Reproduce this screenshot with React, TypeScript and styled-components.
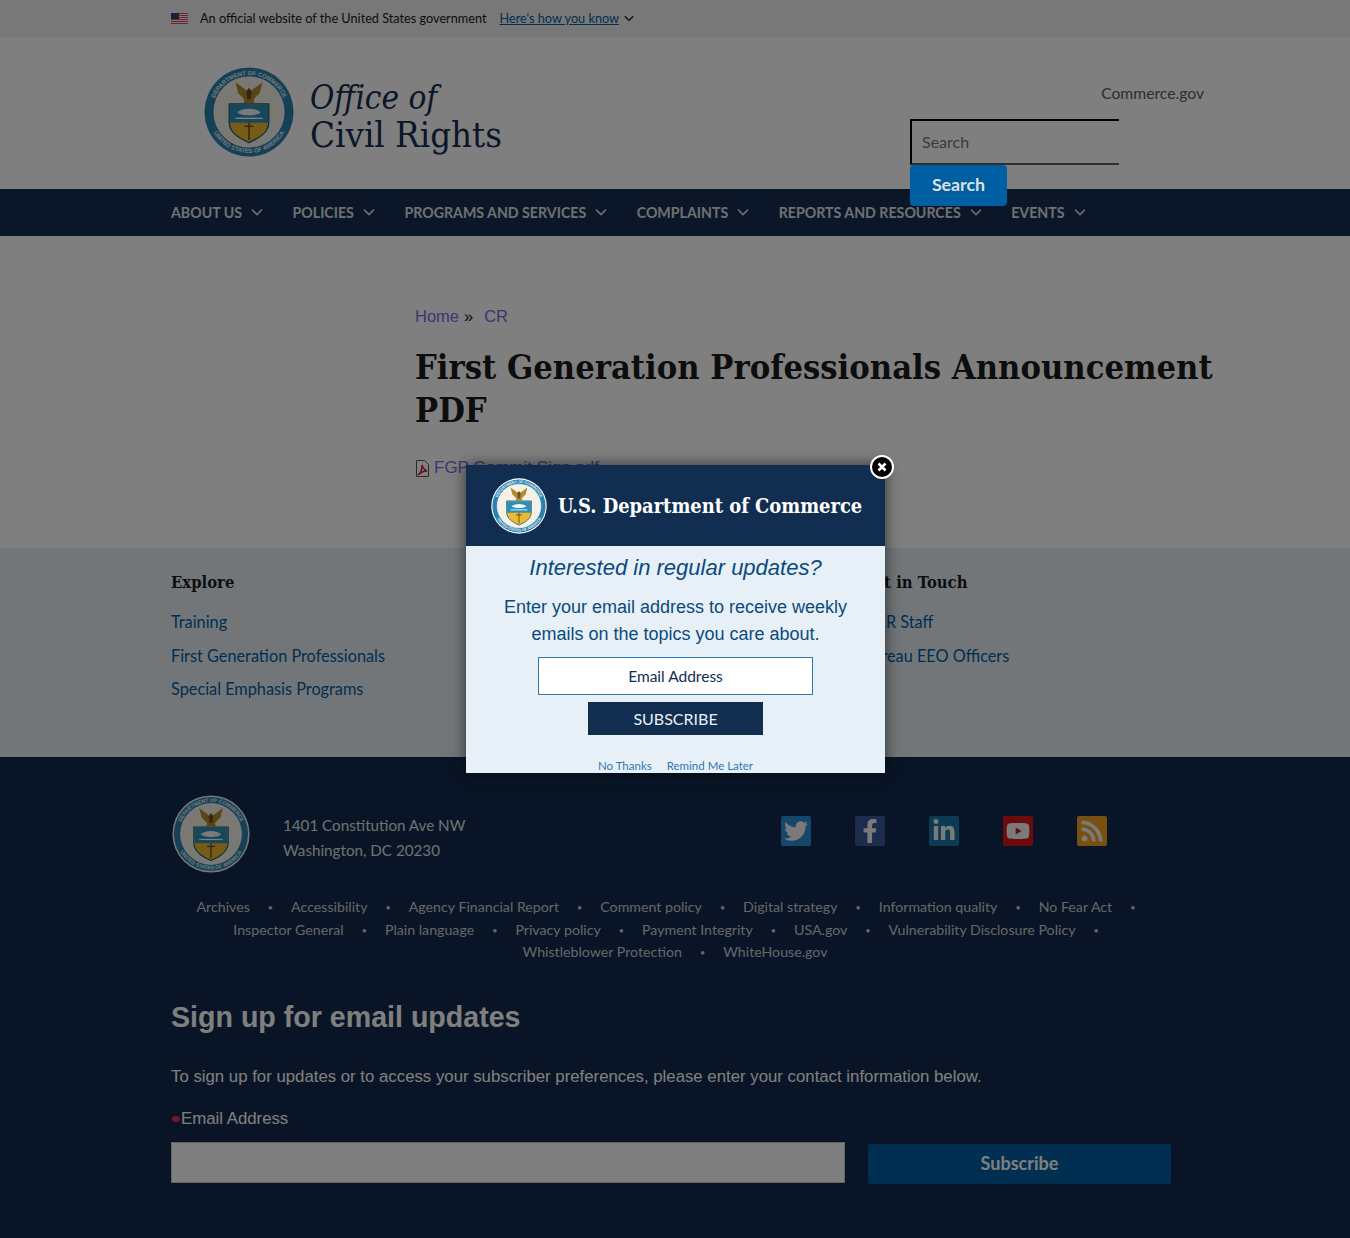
import styled, { createGlobalStyle } from 'styled-components';
import { FaFacebookF, FaLinkedinIn, FaRss, FaTwitter, FaYoutube } from 'react-icons/fa';

const sans = `Lato, 'Noto Sans', sans-serif`;
const serif = `'DejaVu Serif Condensed', 'DejaVu Serif', serif`;
const arial = `'Liberation Sans', Arial, sans-serif`;

const GlobalStyle = createGlobalStyle`
	* {
		box-sizing: border-box;
	}
	html, body {
		margin: 0;
		padding: 0;
		background: #fff;
	}
`;

const Page = styled.div`
	position: relative;
	width: 1350px;
	height: 1238px;
	overflow: hidden;
	font-family: ${sans};
`;

const Banner = styled.div`
	display: flex;
	align-items: center;
	height: 38px;
	padding: 0 0 2px 171px;
	background: #f0f0f0;
	font-size: 12.7px;
	color: #1b1b1b;
`;

const BannerText = styled.span`
	margin-left: 12px;
`;

const BannerLink = styled.a`
	margin: 0 5px 0 13px;
	color: #005ea2;
	text-decoration: underline;
`;

const Masthead = styled.header`
	display: flex;
	justify-content: space-between;
	height: 151px;
	padding: 29px 146px 0 204px;
`;

const Brand = styled.div`
	display: flex;
	align-items: center;
	gap: 16px;
	height: 90px;
`;

const BrandTitle = styled.div`
	padding-top: 8px;
	font-family: ${serif};
	font-size: 36.3px;
	line-height: 37px;
	color: #162e51;
`;

const BrandItalic = styled.em`
	display: block;
	font-size: 33px;
	font-style: italic;
`;

const Tools = styled.div`
	display: flex;
	flex-direction: column;
	width: 294px;
	padding-top: 16px;
`;

const ToolLink = styled.a`
	align-self: flex-end;
	font-size: 15.7px;
	line-height: 20px;
	color: #565c65;
`;

const SearchInput = styled.div`
	display: flex;
	flex: none;
	align-items: center;
	width: 209px;
	height: 46px;
	margin-top: 16px;
	padding: 0 0 2px 10px;
	border-top: 2px solid #000;
	border-left: 2px solid #000;
	border-bottom: 2px solid #565c65;
	font-size: 16px;
	color: #757575;
`;

const SearchButton = styled.button`
	position: relative;
	z-index: 1;
	flex: none;
	width: 97px;
	height: 41px;
	padding: 0 0 3px;
	border: 0;
	border-radius: 4px;
	background: #005ea2;
	font-family: ${sans};
	font-size: 17.8px;
	font-weight: 700;
	color: #dfe1e2;
`;

const NavBar = styled.nav`
	display: flex;
	align-items: center;
	gap: 29.5px;
	height: 47px;
	padding: 0 0 1px 171px;
	background: #162e51;
`;

const NavItem = styled.a`
	display: flex;
	align-items: center;
	gap: 9px;
	font-size: 14.2px;
	font-weight: 700;
	color: #dfe1e2;
`;

const Content = styled.main`
	height: 312px;
	padding: 68px 120px 0 415px;
`;

const Crumbs = styled.div`
	display: flex;
	align-items: center;
	height: 24px;
	font-family: ${arial};
	font-size: 16.5px;
	color: #1b1b1b;
`;

const CrumbLink = styled.a`
	color: #7070e0;
`;

const CrumbSep = styled.span`
	margin: 0 11px 0 5px;
`;

const PageTitle = styled.h1`
	margin: 18px 0 0;
	font-family: ${serif};
	font-size: 34.2px;
	font-weight: 700;
	line-height: 43px;
	color: #1b1b1b;
`;

const FileRow = styled.div`
	display: flex;
	align-items: center;
	gap: 4px;
	margin-top: 26px;
	font-family: ${arial};
	font-size: 17px;
	color: #7070e0;
`;

const Explore = styled.section`
	display: grid;
	grid-template-columns: 345.5px 345.5px 317px;
	height: 209px;
	padding: 24px 0 0 171px;
	background: #e4ecf3;
`;

const ExploreHeading = styled.h3`
	margin: 0 0 11px;
	font-family: ${serif};
	font-size: 16.5px;
	font-weight: 700;
	line-height: 22px;
	color: #1b1b1b;
`;

const ExploreLink = styled.a`
	display: block;
	font-size: 16.3px;
	line-height: 33.5px;
	color: #005ea2;
`;

const Footer = styled.footer`
	height: 481px;
	padding: 38px 171px 0;
	background: #122a4c;
`;

const FooterTop = styled.div`
	display: flex;
	align-items: center;
	padding-left: 1px;
`;

const Address = styled.address`
	width: 498px;
	margin: 8px 0 0 33px;
	font-style: normal;
	font-size: 15.2px;
	line-height: 25px;
	color: #dfe1e2;
`;

const Socials = styled.div`
	display: flex;
	gap: 44px;
	margin-top: -6px;
`;

const SocialTile = styled.a<{ $bg: string }>`
	display: flex;
	align-items: center;
	justify-content: center;
	width: 30px;
	height: 30px;
	border-radius: 2px;
	background: ${p => p.$bg};
	font-size: 24px;
	color: #f4f4f4;
`;

const FooterLinks = styled.div`
	margin-top: 23px;
	font-size: 14.2px;
	line-height: 22.5px;
	color: #c9ced3;
`;

const FooterRow = styled.div`
	display: flex;
	justify-content: center;
	height: 22.5px;
	white-space: nowrap;
`;

const FooterLink = styled.span<{ $dot: boolean }>`
	&::after {
		content: ${p => (p.$dot ? "'•'" : 'none')};
		margin: 0 18px;
		font-size: 9px;
		vertical-align: 1px;
	}
`;

const SignupHeading = styled.h2`
	margin: 35px 0 0;
	font-family: ${arial};
	font-size: 28.6px;
	font-weight: 700;
	line-height: 36px;
	color: #fff;
`;

const SignupCopy = styled.p`
	margin: 31px 0 0;
	font-family: ${arial};
	font-size: 16.8px;
	line-height: 22px;
	color: #fff;
`;

const SignupLabel = styled.label`
	display: flex;
	align-items: center;
	margin-top: 19px;
	font-family: ${arial};
	font-size: 16.8px;
	line-height: 24px;
	color: #fff;
`;

const Required = styled.span`
	width: 8px;
	height: 6px;
	margin: 0 1px 0 1px;
	border-radius: 50%;
	background: #ee2a5a;
`;

const SignupRow = styled.div`
	display: flex;
	align-items: flex-start;
	gap: 23px;
	margin-top: 11px;
`;

const SignupInput = styled.div`
	width: 674px;
	height: 41px;
	border: 1px solid #c4c8cc;
	background: #fff;
`;

const SignupButton = styled.button`
	width: 303px;
	height: 40px;
	margin-top: 2px;
	padding: 0 0 2px;
	border: 0;
	border-radius: 2px;
	background: #005ea2;
	font-family: ${sans};
	font-size: 18px;
	font-weight: 700;
	color: #fff;
`;

const Scrim = styled.div`
	position: absolute;
	inset: 0;
	background: rgba(0, 0, 0, 0.5);
`;

const Modal = styled.div`
	position: absolute;
	left: 466px;
	top: 465px;
	width: 419px;
	height: 308px;
	background: #e8f0f7;
	box-shadow: 0 0 14px rgba(0, 0, 0, 0.6);
`;

const ModalClose = styled.button`
	position: absolute;
	top: -10px;
	right: -9px;
	z-index: 1;
	display: flex;
	align-items: center;
	justify-content: center;
	width: 24px;
	height: 24px;
	padding: 0;
	border: 2px solid #fff;
	border-radius: 50%;
	background: #000;
`;

const ModalHead = styled.div`
	display: flex;
	align-items: center;
	gap: 11px;
	height: 81px;
	padding-left: 25px;
	background: #112e51;
`;

const ModalBrand = styled.div`
	font-family: ${serif};
	font-size: 19.9px;
	font-weight: 700;
	color: #fff;
`;

const ModalBody = styled.div`
	display: flex;
	flex-direction: column;
	align-items: center;
	height: 227px;
	overflow: hidden;
	padding-top: 8px;
	color: #0b4a7d;
	font-family: ${arial};
	text-align: center;
`;

const ModalTitle = styled.div`
	font-size: 22px;
	font-style: italic;
	line-height: 27px;
`;

const ModalCopy = styled.div`
	width: 370px;
	margin-top: 13px;
	font-size: 18px;
	line-height: 27px;
`;

const ModalInput = styled.div`
	width: 275px;
	height: 38px;
	margin-top: 9px;
	border: 1px solid #2e78b5;
	background: #fff;
	font-family: ${sans};
	font-size: 15.5px;
	line-height: 36px;
	color: #112e51;
`;

const ModalSubmit = styled.button`
	width: 175px;
	height: 36px;
	margin-top: 7px;
	border: 0;
	background: #112e51;
	font-family: ${sans};
	font-size: 16px;
	color: #e8f0f7;
`;

const ModalLinks = styled.div`
	display: flex;
	flex: none;
	gap: 15px;
	margin-top: 24px;
	font-family: ${sans};
	font-size: 11.5px;
	line-height: 14px;
	color: #2e78b5;
`;

function Seal({ id, size, rim }: { id: string; size: number; rim: string }) {
	return (
		<svg width={size} height={size} viewBox="0 0 100 100">
			<defs>
				<path id={`${id}Top`} d="M9 50a41 41 0 0 1 82 0" />
				<path id={`${id}Bottom`} d="M4.500 50a45.500 45.500 0 0 0 91 0" />
			</defs>
			<circle cx="50" cy="50" r="49.5" fill={rim} />
			<circle cx="50" cy="50" r="47.5" fill="#2b80ad" />
			<circle cx="50" cy="50" r="39" fill="#f4f1e6" stroke="#fff" strokeWidth="1" />
			<text fontFamily="'Liberation Sans', sans-serif" fontSize="6.6" fontWeight="700" fill="#e8f2f8">
				<textPath href={`#${id}Top`} startOffset="50%" textAnchor="middle">
					DEPARTMENT OF COMMERCE
				</textPath>
			</text>
			<text fontFamily="'Liberation Sans', sans-serif" fontSize="6.6" fontWeight="700" fill="#e8f2f8">
				<textPath href={`#${id}Bottom`} startOffset="50%" textAnchor="middle">
					UNITED STATES OF AMERICA
				</textPath>
			</text>
			{/* eagle */}
			<path d="M35 17l11 8 4 5 4-5 11-8-3 12-7 7 1 4H44l1-4-7-7z" fill="#b58a2a" />
			<path d="M47 27l3-4 3 4-1 9h-4z" fill="#6f4f1c" />
			{/* shield */}
			<path d="M28 41h44v20c0 12-11 18-22 23-11-5-22-11-22-23z" fill="#efb92e" stroke="#145a78" strokeWidth="1.4" />
			<path d="M28.700 41.700h42.600V62H28.700z" fill="#2c8fb5" />
			<path d="M37 50c7-5 19-5 26 0-2 5-24 5-26 0z" fill="#f4f4f4" />
			<path d="M35 57h30" stroke="#fff" strokeWidth="1.500" />
			<path d="M50 62v19M45 66h10" stroke="#5a4a1c" strokeWidth="1.600" fill="none" />
		</svg>
	);
}

function Chevron({ color = '#dfe1e2', size = 12 }: { color?: string; size?: number }) {
	return (
		<svg width={size} height={size * 0.67} viewBox="0 0 12 8" fill="none">
			<path d="M1 1.500l5 5 5-5" stroke={color} strokeWidth="1.600" />
		</svg>
	);
}

function Flag() {
	return (
		<svg width="17" height="11" viewBox="0 0 17 11">
			<rect width="17" height="11" fill="#fff" />
			{[0, 2, 4, 6, 8, 10].map(y => (
				<rect key={y} y={y} width="17" height="1" fill="#d8414e" />
			))}
			<rect width="8" height="6" fill="#2a3f7d" />
		</svg>
	);
}

function PdfIcon() {
	return (
		<svg width="15" height="17" viewBox="0 0 15 17">
			<path d="M1.500.5h8l4 4v12h-12z" fill="#fff" stroke="#555" />
			<path d="M3 15c3-2 4-6 4-10 1 3 2 5 5 6-3 0-6 1-9 4z" fill="none" stroke="#c9202a" strokeWidth="1.400" />
		</svg>
	);
}

const navItems = ['ABOUT US', 'POLICIES', 'PROGRAMS AND SERVICES', 'COMPLAINTS', 'REPORTS AND RESOURCES', 'EVENTS'];

const linkRows = [
	['Archives', 'Accessibility', 'Agency Financial Report', 'Comment policy', 'Digital strategy', 'Information quality', 'No Fear Act'],
	['Inspector General', 'Plain language', 'Privacy policy', 'Payment Integrity', 'USA.gov', 'Vulnerability Disclosure Policy'],
	['Whistleblower Protection', 'WhiteHouse.gov']
];

export default function App() {
	return (
		<Page>
			<GlobalStyle />
			<Banner>
				<Flag />
				<BannerText>An official website of the United States government</BannerText>
				<BannerLink>Here's how you know</BannerLink>
				<Chevron color="#1b1b1b" size={10} />
			</Banner>
			<Masthead>
				<Brand>
					<Seal id="head" size={90} rim="#2b80ad" />
					<BrandTitle>
						<BrandItalic>Office of</BrandItalic>
						Civil Rights
					</BrandTitle>
				</Brand>
				<Tools>
					<ToolLink>Commerce.gov</ToolLink>
					<SearchInput>Search</SearchInput>
					<SearchButton>Search</SearchButton>
				</Tools>
			</Masthead>
			<NavBar>
				{navItems.map(item => (
					<NavItem key={item}>
						{item}
						<Chevron />
					</NavItem>
				))}
			</NavBar>
			<Content>
				<Crumbs>
					<CrumbLink>Home</CrumbLink>
					<CrumbSep>»</CrumbSep>
					<CrumbLink>CR</CrumbLink>
				</Crumbs>
				<PageTitle>First Generation Professionals Announcement PDF</PageTitle>
				<FileRow>
					<PdfIcon />
					FGP Commit Sign.pdf
				</FileRow>
			</Content>
			<Explore>
				<div>
					<ExploreHeading>Explore</ExploreHeading>
					<ExploreLink>Training</ExploreLink>
					<ExploreLink>First Generation Professionals</ExploreLink>
					<ExploreLink>Special Emphasis Programs</ExploreLink>
				</div>
				<div />
				<div>
					<ExploreHeading>Get in Touch</ExploreHeading>
					<ExploreLink>OCR Staff</ExploreLink>
					<ExploreLink>Bureau EEO Officers</ExploreLink>
				</div>
			</Explore>
			<Footer>
				<FooterTop>
					<Seal id="foot" size={78} rim="#e8eef2" />
					<Address>
						1401 Constitution Ave NW
						<br />
						Washington, DC 20230
					</Address>
					<Socials>
						<SocialTile $bg="#2a8fd6"><FaTwitter /></SocialTile>
						<SocialTile $bg="#3b5998"><FaFacebookF /></SocialTile>
						<SocialTile $bg="#1a77a8"><FaLinkedinIn /></SocialTile>
						<SocialTile $bg="#d8141c"><FaYoutube /></SocialTile>
						<SocialTile $bg="#f0a020"><FaRss /></SocialTile>
					</Socials>
				</FooterTop>
				<FooterLinks>
					{linkRows.map((row, r) => (
						<FooterRow key={r}>
							{row.map((item, i) => (
								<FooterLink key={item} $dot={r < 2 || i < row.length - 1}>
									{item}
								</FooterLink>
							))}
						</FooterRow>
					))}
				</FooterLinks>
				<SignupHeading>Sign up for email updates</SignupHeading>
				<SignupCopy>
					To sign up for updates or to access your subscriber preferences, please enter your contact information below.
				</SignupCopy>
				<SignupLabel>
					<Required />
					Email Address
				</SignupLabel>
				<SignupRow>
					<SignupInput />
					<SignupButton>Subscribe</SignupButton>
				</SignupRow>
			</Footer>
			<Scrim />
			<Modal>
				<ModalClose>
					<svg width="10" height="10" viewBox="0 0 10 10">
						<path d="M1.500 1.500l7 7M8.500 1.500l-7 7" stroke="#fff" strokeWidth="2.600" />
					</svg>
				</ModalClose>
				<ModalHead>
					<Seal id="modal" size={56} rim="#fff" />
					<ModalBrand>U.S. Department of Commerce</ModalBrand>
				</ModalHead>
				<ModalBody>
					<ModalTitle>Interested in regular updates?</ModalTitle>
					<ModalCopy>Enter your email address to receive weekly emails on the topics you care about.</ModalCopy>
					<ModalInput>Email Address</ModalInput>
					<ModalSubmit>SUBSCRIBE</ModalSubmit>
					<ModalLinks>
						<span>No Thanks</span>
						<span>Remind Me Later</span>
					</ModalLinks>
				</ModalBody>
			</Modal>
		</Page>
	);
}
